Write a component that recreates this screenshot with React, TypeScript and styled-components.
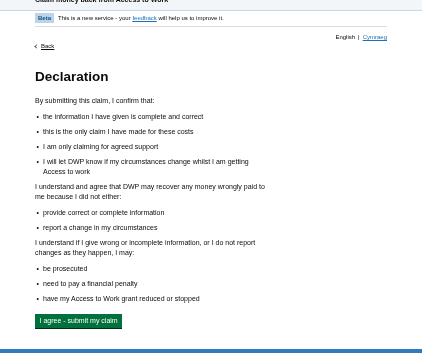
import React from "react";
import styled, { createGlobalStyle } from "styled-components";

const Global = createGlobalStyle`
  html, body { margin: 0; padding: 0; background: #ffffff; }
  body {
    font-family: "Liberation Sans", Arial, sans-serif;
    color: #0b0c0c;
    -webkit-font-smoothing: antialiased;
  }
  * { box-sizing: border-box; }
`;

const Page = styled.div`
  width: 422px;
  height: 353px;
  display: flex;
  flex-direction: column;
  overflow: hidden;
  will-change: transform;
`;

const Header = styled.header`
  height: 11px;
  background: #f3f6f9;
  border-bottom: 1px solid #c8d7e6;
  display: flex;
  align-items: flex-end;
  padding: 0 35px 6px;
  overflow: hidden;
  flex-shrink: 0;
`;

const ServiceName = styled.div`
  font-size: 7px;
  font-weight: 700;
  line-height: 8px;
  color: #0b0c0c;
  white-space: nowrap;
`;

const Container = styled.main`
  margin: 0 35px;
  flex: 1;
  display: flex;
  flex-direction: column;
`;

const PhaseBanner = styled.div`
  display: flex;
  align-items: center;
  gap: 4px;
  padding: 2px 0 3px;
  border-bottom: 1px solid #dcdcdc;
  font-size: 6px;
  line-height: 9px;
`;

const Tag = styled.strong`
  background: #bbd4ea;
  color: #144e81;
  font-weight: 700;
  padding: 0 3px;
  font-size: 6px;
  line-height: 10px;
`;

const Link = styled.a`
  color: #1d70b8;
  text-decoration: underline;
`;

const LangRow = styled.div`
  display: flex;
  justify-content: flex-end;
  gap: 3px;
  font-size: 6px;
  line-height: 8px;
  margin-top: 6px;
`;

const Back = styled.a`
  display: inline-flex;
  align-items: center;
  gap: 3px;
  align-self: flex-start;
  font-size: 6px;
  line-height: 8px;
  color: #0b0c0c;
  text-decoration: underline;
  margin-top: 1px;
`;

const Chevron = styled.span`
  width: 3px;
  height: 3px;
  border-left: 1px solid #505a5f;
  border-bottom: 1px solid #505a5f;
  transform: rotate(45deg);
  display: inline-block;
`;

const Content = styled.div`
  width: 235px;
  margin-top: 18px;
`;

const H1 = styled.h1`
  font-size: 13.5px;
  line-height: 18px;
  font-weight: 700;
  margin: 0 0 10px;
`;

const P = styled.p`
  font-size: 7px;
  line-height: 10px;
  margin: 0 0 6px;
`;

const List = styled.ul`
  margin: 0 0 5px;
  padding: 0;
  list-style: none;
  font-size: 7px;
  line-height: 10px;
`;

const Item = styled.li`
  display: flex;
  margin-bottom: 5px;

  &::before {
    content: "•";
    flex: 0 0 7px;
    padding-left: 1.5px;
    margin-right: -0.5px;
  }
`;

const Button = styled.button`
  background: #00703c;
  color: #ffffff;
  border: none;
  box-shadow: 0 1px 0 #002d18;
  font-family: inherit;
  font-size: 7px;
  line-height: 10px;
  padding: 2px 4.5px 2px;
  margin-top: -1px;
`;

const Footer = styled.footer`
  height: 4px;
  background: #2f7bbf;
  flex-shrink: 0;
`;

export default function App() {
  return (
    <Page>
      <Global />
      <Header>
        <ServiceName>Claim money back from Access to Work</ServiceName>
      </Header>
      <Container>
        <PhaseBanner>
          <Tag>Beta</Tag>
          <span>
            This is a new service - your <Link href="#">feedback</Link> will help us to improve it.
          </span>
        </PhaseBanner>
        <LangRow>
          <span>English</span>
          <span>|</span>
          <Link href="#">Cymraeg</Link>
        </LangRow>
        <Back href="#">
          <Chevron />
          Back
        </Back>
        <Content>
          <H1>Declaration</H1>
          <P>By submitting this claim, I confirm that:</P>
          <List>
            <Item>the information I have given is complete and correct</Item>
            <Item>this is the only claim I have made for these costs</Item>
            <Item>I am only claiming for agreed support</Item>
            <Item>I will let DWP know if my circumstances change whilst I am getting Access to work</Item>
          </List>
          <P>I understand and agree that DWP may recover any money wrongly paid to me because I did not either:</P>
          <List>
            <Item>provide correct or complete information</Item>
            <Item>report a change in my circumstances</Item>
          </List>
          <P>I understand if I give wrong or incomplete information, or I do not report changes as they happen, I may:</P>
          <List>
            <Item>be prosecuted</Item>
            <Item>need to pay a financial penalty</Item>
            <Item>have my Access to Work grant reduced or stopped</Item>
          </List>
          <Button>I agree - submit my claim</Button>
        </Content>
      </Container>
      <Footer />
    </Page>
  );
}
